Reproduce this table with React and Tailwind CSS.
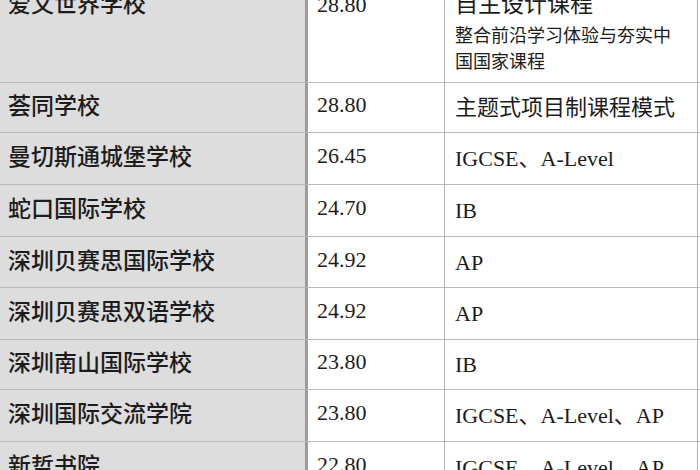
const rows = [
  { name: '荟同学校', score: '28.80', course: '主题式项目制课程模式', h: 50 },
  { name: '曼切斯通城堡学校', score: '26.45', course: 'IGCSE、A-Level', h: 52 },
  { name: '蛇口国际学校', score: '24.70', course: 'IB', h: 52 },
  { name: '深圳贝赛思国际学校', score: '24.92', course: 'AP', h: 51 },
  { name: '深圳贝赛思双语学校', score: '24.92', course: 'AP', h: 52 },
  { name: '深圳南山国际学校', score: '23.80', course: 'IB', h: 50 },
  { name: '深圳国际交流学院', score: '23.80', course: 'IGCSE、A-Level、AP', h: 52 },
  { name: '新哲书院', score: '22.80', course: 'IGCSE、A-Level、AP', h: 51 },
];

const font = { fontFamily: '"Liberation Serif", "Noto Sans CJK SC", serif' };

export default function App() {
  return (
    <div className="w-[700px] h-[470px] overflow-hidden bg-white text-[#1c1c1c]" style={font}>
      <div className="-mt-[18px]">
        {/* 第一行：多行课程说明 */}
        <div className="flex h-[101px] border-b border-[#b9b9b9]">
          <div className="w-[308px] shrink-0 bg-[#dcdddc] border-r-[3px] border-[#9c9c9c] pl-[8px] pt-[8px] text-[23px] leading-[30px] font-medium">
            爱文世界学校
          </div>
          <div className="w-[137px] shrink-0 border-r border-[#b4b4b4] pl-[9px] pt-[8px] text-[22px] leading-[30px]">
            28.80
          </div>
          <div className="w-[253px] shrink-0 border-r border-[#b4b4b4] pl-[10px] pt-[8px]">
            <div className="text-[23px] leading-[30px]">自主设计课程</div>
            <div className="mt-[3px] text-[18px] leading-[26px]">
              整合前沿学习体验与夯实中
              <br />
              国国家课程
            </div>
          </div>
        </div>

        {rows.map((r) => (
          <div key={r.name} className="flex border-b border-[#b9b9b9]" style={{ height: r.h }}>
            <div className="w-[308px] shrink-0 bg-[#dcdddc] border-r-[3px] border-[#9c9c9c] pl-[8px] flex items-center text-[23px] font-medium">
              {r.name}
            </div>
            <div className="w-[137px] shrink-0 border-r border-[#b4b4b4] pl-[9px] pb-[6px] flex items-center text-[22px]">
              {r.score}
            </div>
            <div className="w-[253px] shrink-0 border-r border-[#b4b4b4] pl-[10px] flex items-center text-[22px]">
              {r.course}
            </div>
          </div>
        ))}
      </div>
    </div>
  );
}
